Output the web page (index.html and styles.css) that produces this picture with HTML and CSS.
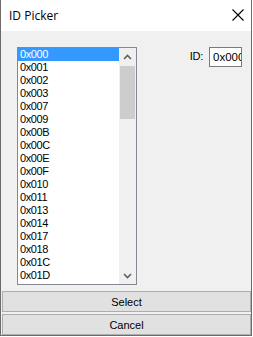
FILE: index.html
```html
<!DOCTYPE html>
<html lang="en">
<head>
    <meta charset="UTF-8">
    <title>ID Picker</title>
    <link rel="stylesheet" href="styles.css">
</head>
<body>
    <div class="window">
        <div class="titlebar">
            <span class="title">ID Picker</span>
            <svg class="close" width="12" height="12" viewBox="0 0 12 12">
                <path d="M0.5 0.5 L11.5 11.5 M11.5 0.5 L0.5 11.5" stroke="#000" stroke-width="1.1" fill="none"/>
            </svg>
        </div>
        <div class="content">
            <div class="listbox">
                <ul class="items">
                    <li class="selected">0x000</li>
                    <li>0x001</li>
                    <li>0x002</li>
                    <li>0x003</li>
                    <li>0x007</li>
                    <li>0x009</li>
                    <li>0x00B</li>
                    <li>0x00C</li>
                    <li>0x00E</li>
                    <li>0x00F</li>
                    <li>0x010</li>
                    <li>0x011</li>
                    <li>0x013</li>
                    <li>0x014</li>
                    <li>0x017</li>
                    <li>0x018</li>
                    <li>0x01C</li>
                    <li>0x01D</li>
                </ul>
                <div class="scrollbar">
                    <div class="arrow">
                        <svg width="9" height="6" viewBox="0 0 9 6"><path d="M1 5 L4.5 1.5 L8 5" stroke="#606060" stroke-width="1.6" fill="none"/></svg>
                    </div>
                    <div class="track">
                        <div class="thumb"></div>
                    </div>
                    <div class="arrow">
                        <svg width="9" height="6" viewBox="0 0 9 6"><path d="M1 1 L4.5 4.5 L8 1" stroke="#606060" stroke-width="1.6" fill="none"/></svg>
                    </div>
                </div>
            </div>
            <div class="id-field">
                <label for="id-input">ID:</label>
                <div class="textbox" id="id-input">0x000</div>
            </div>
        </div>
        <div class="buttons">
            <button>Select</button>
            <button>Cancel</button>
        </div>
    </div>
</body>
</html>
```

FILE: styles.css
```css
body {
    margin: 0;
    background: #fff;
    font-family: "Liberation Sans", Arial, sans-serif;
    font-size: 11px;
    color: #000;
}
.window {
    width: 252px;
    height: 336px;
    box-sizing: border-box;
    border: 1px solid #6c6c6c;
    border-top: none;
    background: #f0f0f0;
    display: flex;
    flex-direction: column;
}
.titlebar {
    height: 31px;
    background: #fff;
    display: flex;
    align-items: center;
    justify-content: space-between;
    padding: 0 7px 0 8px;
    flex-shrink: 0;
}
.title {
    font-family: "Open Sans", "Noto Sans", sans-serif;
    font-size: 12px;
    margin-top: -1px;
}
.close {
    display: block;
    margin-top: -1px;
}
.content {
    flex: 1;
    display: flex;
    align-items: flex-start;
    padding: 16px 9px 0 16px;
}
.listbox {
    width: 120px;
    height: 238px;
    box-sizing: border-box;
    border: 1px solid #828790;
    background: #fff;
    display: flex;
}
.items {
    list-style: none;
    margin: 0;
    padding: 0;
    flex: 1;
}
.items li {
    height: 13px;
    line-height: 13px;
    padding-left: 2px;
    letter-spacing: -0.4px;
}
.items li.selected {
    background: #3399ff;
    color: #fff;
}
.scrollbar {
    width: 17px;
    background: #f0f0f0;
    display: flex;
    flex-direction: column;
}
.arrow {
    height: 17px;
    display: flex;
    align-items: center;
    justify-content: center;
}
.track {
    flex: 1;
    padding: 1px 1px 0 1px;
}
.thumb {
    height: 53px;
    background: #cdcdcd;
}
.id-field {
    margin-left: auto;
    display: flex;
    align-items: flex-start;
    gap: 6px;
}
.id-field label {
    margin-top: 3px;
    letter-spacing: -0.3px;
}
.textbox {
    width: 33px;
    height: 20px;
    box-sizing: border-box;
    border: 1px solid #7a7a7a;
    background: #fff;
    padding: 3px 0 0 3px;
    overflow: hidden;
    white-space: nowrap;
    font-size: 11.5px;
}
.buttons {
    display: flex;
    flex-direction: column;
    gap: 2px;
    padding: 0 0 0 1px;
}
.buttons button {
    height: 21px;
    margin: 0;
    border: 1px solid #adadad;
    background: #e1e1e1;
    font-family: "Liberation Sans", Arial, sans-serif;
    font-size: 11px;
    color: #000;
    padding: 0;
}
```
